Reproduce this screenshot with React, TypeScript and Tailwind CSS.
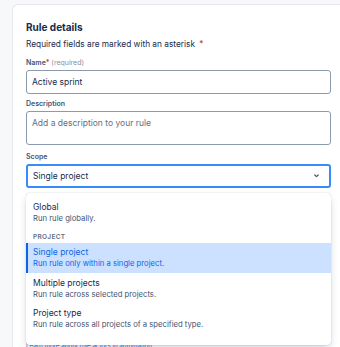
const font = { fontFamily: "Inter, 'Noto Sans', sans-serif" };

const options = [
    { title: "Multiple projects", desc: "Run rule across selected projects." },
    { title: "Project type", desc: "Run rule across all projects of a specified type." },
];

const App = () => {
    return (
        <div className="h-[347px] w-[340px] overflow-hidden bg-[#f7f8f9] pl-3 pt-1" style={font}>
            <div className="h-full rounded-tl-[6px] border-l border-t border-[#e6e8eb] bg-white pl-[13px] pr-[9px] pt-[13px]">
                <h1 className="text-[10px] font-bold leading-[18px] text-[#172b4d]">Rule details</h1>
                <p className="text-[8.3px] leading-[16px] text-[#172b4d]">
                    Required fields are marked with an asterisk <span className="ml-0.5 text-[#c9372c]">*</span>
                </p>

                <label className="mt-1 block text-[7px] font-semibold leading-[14px] text-[#44546f]">
                    Name<span className="text-[#c9372c]">*</span>{" "}
                    <span className="font-normal text-[#8590a2]">(required)</span>
                </label>
                <div className="flex h-[24px] items-center rounded-[3px] border border-[#8c9bab] px-[5px] text-[8.5px] text-[#172b4d]">
                    Active sprint
                </div>

                <label className="mt-[3px] block text-[7px] font-semibold leading-[14px] text-[#44546f]">Description</label>
                <div className="h-[34px] rounded-[3px] border border-[#8c9bab] px-[5px] pt-[5px] text-[8.5px] leading-[12px] text-[#626f86]">
                    Add a description to your rule
                </div>

                <label className="mt-[5px] block text-[7px] font-semibold leading-[14px] text-[#44546f]">Scope</label>
                <div className="relative">
                    <div className="flex h-[24px] items-center justify-between rounded-[3px] border-2 border-[#388bff] pl-[5px] pr-[10px] text-[8.5px] text-[#172b4d]">
                        <span>Single project</span>
                        <svg width="5" height="4" viewBox="0 0 5 4" fill="none">
                            <path d="M0.8 1l1.7 1.7L4.2 1" stroke="#44546f" strokeWidth="1.2" strokeLinecap="round" strokeLinejoin="round" />
                        </svg>
                    </div>

                    <p className="mt-[153px] text-[6.2px] leading-[10px] text-[#0c66e4] underline">
                        Learn more about rule actors in automation.
                    </p>

                    <div className="absolute left-0 right-0 top-[29px] rounded-[4px] bg-white pb-[12px] pt-[8px] shadow-[0_4px_8px_-2px_rgba(9,30,66,0.25),0_0_1px_rgba(9,30,66,0.31)]">
                        <div className="px-[7px] pb-[3px]">
                            <div className="text-[8.5px] leading-[12px] text-[#172b4d]">Global</div>
                            <div className="text-[7.7px] leading-[12px] text-[#44546f]">Run rule globally.</div>
                        </div>
                        <div className="px-[7px] pt-[3px] text-[6.5px] font-semibold uppercase leading-[12px] tracking-[0.3px] text-[#626f86]">
                            Project
                        </div>
                        <div className="h-[30px] border-l-2 border-[#0c66e4] bg-[#cce0ff] pl-[5px] pt-[3px]">
                            <div className="text-[8.5px] leading-[12px] text-[#0c66e4]">Single project</div>
                            <div className="text-[7.7px] leading-[12px] text-[#0c66e4]">Run rule only within a single project.</div>
                        </div>
                        {options.map((o) => (
                            <div key={o.title} className="h-[30px] px-[7px] pt-[4px]">
                                <div className="text-[8.5px] leading-[12px] text-[#172b4d]">{o.title}</div>
                                <div className="text-[7.7px] leading-[12px] text-[#44546f]">{o.desc}</div>
                            </div>
                        ))}
                    </div>
                </div>
            </div>
        </div>
    );
};

export default App;
